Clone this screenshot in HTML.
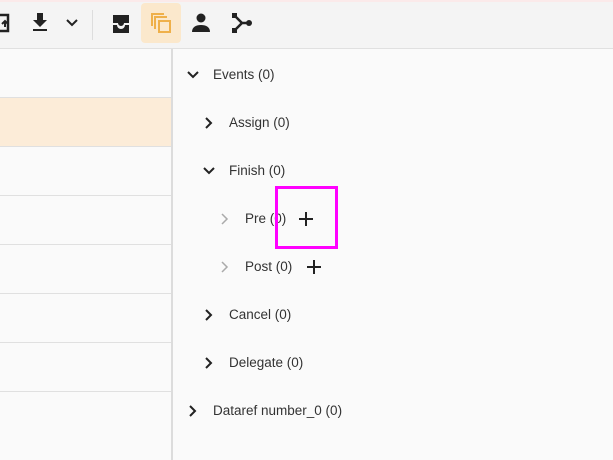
<!DOCTYPE html>
<html><head><style>
body{margin:0;width:613px;height:460px;overflow:hidden;background:#fafafa;font-family:"Liberation Sans",sans-serif;position:relative}
.tb{position:absolute;left:0;top:0;width:613px;height:49px;background:#f4f4f4;border-bottom:1px solid #e0e0e0;border-top:2px solid #fbeaea;box-sizing:border-box}
.ln{position:absolute;left:0;width:171px;height:1px;background:#e0e0e0}
.div{position:absolute;left:171px;top:49px;width:2px;height:411px;background:#dcdcdc}
.row{position:absolute;font-size:13.5px;color:#333;height:20px;line-height:20px}
.ch{position:absolute}
svg{display:block}
</style></head><body>
<div class="tb"></div>
<svg style="position:absolute;left:0;top:12px" width="12" height="22" viewBox="0 0 12 22"><path d="M0 3h8v16H0" fill="none" stroke="#222" stroke-width="2.5"/><path d="M2 12l3-3 3 3M5 9v6" stroke="#222" stroke-width="2" fill="none"/></svg>
<svg style="position:absolute;left:31px;top:12px" width="18" height="20" viewBox="0 0 18 20"><path d="M6 1h6v7h4l-7 7-7-7h4z" fill="#222"/><rect x="2" y="17" width="14" height="2" fill="#222"/></svg>
<svg style="position:absolute;left:65px;top:18px" width="14" height="10" viewBox="0 0 14 10"><path d="M2 2l5 5 5-5" stroke="#222" stroke-width="2" fill="none"/></svg>
<div style="position:absolute;left:92px;top:10px;width:1px;height:30px;background:#ddd"></div>
<svg style="position:absolute;left:111px;top:14px" width="20" height="20" viewBox="0 0 20 20"><path d="M2 1h16v8h-5a3 3 0 0 1-6 0H2z M2 11h4a4 4 0 0 0 8 0h4v8H2z" fill="#222"/></svg>
<div style="position:absolute;left:141px;top:3px;width:40px;height:40px;background:#fbe8cc;border-radius:4px"></div>
<svg style="position:absolute;left:150px;top:12px" width="24" height="24" viewBox="0 0 24 24"><path d="M2 14V2h12M5 17V5h12" fill="none" stroke="#efb04a" stroke-width="2"/><rect x="9" y="9" width="11" height="11" fill="none" stroke="#efb04a" stroke-width="2"/></svg>
<svg style="position:absolute;left:192px;top:13px" width="18" height="20" viewBox="0 0 18 20"><circle cx="9" cy="5" r="4.5" fill="#222"/><path d="M0 19c0-5 4-7 9-7s9 2 9 7z" fill="#222"/></svg>
<svg style="position:absolute;left:231px;top:12px" width="22" height="22" viewBox="0 0 22 22"><path d="M4 4l7 7h7M4 18l7-7" stroke="#222" stroke-width="2.5" fill="none"/><rect x="1" y="1" width="5" height="5" fill="#222"/><rect x="1" y="16" width="5" height="5" fill="#222"/><circle cx="18" cy="11" r="3" fill="#222"/></svg>
<div style="position:absolute;left:0;top:98px;width:171px;height:48px;background:#fcecd8"></div>
<div class="ln" style="top:97px"></div><div class="ln" style="top:146px"></div><div class="ln" style="top:195px"></div><div class="ln" style="top:244px"></div><div class="ln" style="top:293px"></div><div class="ln" style="top:342px"></div><div class="ln" style="top:391px"></div>
<div class="div"></div>
<svg class="ch" style="left:187px;top:70px" width="12" height="10"><path d="M1 2l5 5 5-5" stroke="#222" stroke-width="2" fill="none"/></svg>
<div class="row" style="left:213px;top:65px">Events (0)</div>
<svg class="ch" style="left:204px;top:117px" width="10" height="12"><path d="M2 1l5 5-5 5" stroke="#222" stroke-width="2" fill="none"/></svg>
<div class="row" style="left:229px;top:113px">Assign (0)</div>
<svg class="ch" style="left:203px;top:166px" width="12" height="10"><path d="M1 2l5 5 5-5" stroke="#222" stroke-width="2" fill="none"/></svg>
<div class="row" style="left:229px;top:161px">Finish (0)</div>
<svg class="ch" style="left:220px;top:213px" width="10" height="12"><path d="M2 1l5 5-5 5" stroke="#aaa" stroke-width="1.5" fill="none"/></svg>
<div class="row" style="left:245px;top:209px">Pre (0)</div>
<svg class="ch" style="left:299px;top:212px" width="14" height="14"><path d="M7 0v14M0 7h14" stroke="#222" stroke-width="2"/></svg>
<svg class="ch" style="left:220px;top:261px" width="10" height="12"><path d="M2 1l5 5-5 5" stroke="#aaa" stroke-width="1.5" fill="none"/></svg>
<div class="row" style="left:245px;top:257px">Post (0)</div>
<svg class="ch" style="left:307px;top:260px" width="14" height="14"><path d="M7 0v14M0 7h14" stroke="#222" stroke-width="2"/></svg>
<svg class="ch" style="left:204px;top:309px" width="10" height="12"><path d="M2 1l5 5-5 5" stroke="#222" stroke-width="2" fill="none"/></svg>
<div class="row" style="left:229px;top:305px">Cancel (0)</div>
<svg class="ch" style="left:204px;top:357px" width="10" height="12"><path d="M2 1l5 5-5 5" stroke="#222" stroke-width="2" fill="none"/></svg>
<div class="row" style="left:229px;top:353px">Delegate (0)</div>
<svg class="ch" style="left:188px;top:405px" width="10" height="12"><path d="M2 1l5 5-5 5" stroke="#222" stroke-width="2" fill="none"/></svg>
<div class="row" style="left:213px;top:401px">Dataref number_0 (0)</div>
<div style="position:absolute;left:275px;top:186px;width:63px;height:63px;border:3px solid #ff00ff;box-sizing:border-box"></div>
</body></html>
